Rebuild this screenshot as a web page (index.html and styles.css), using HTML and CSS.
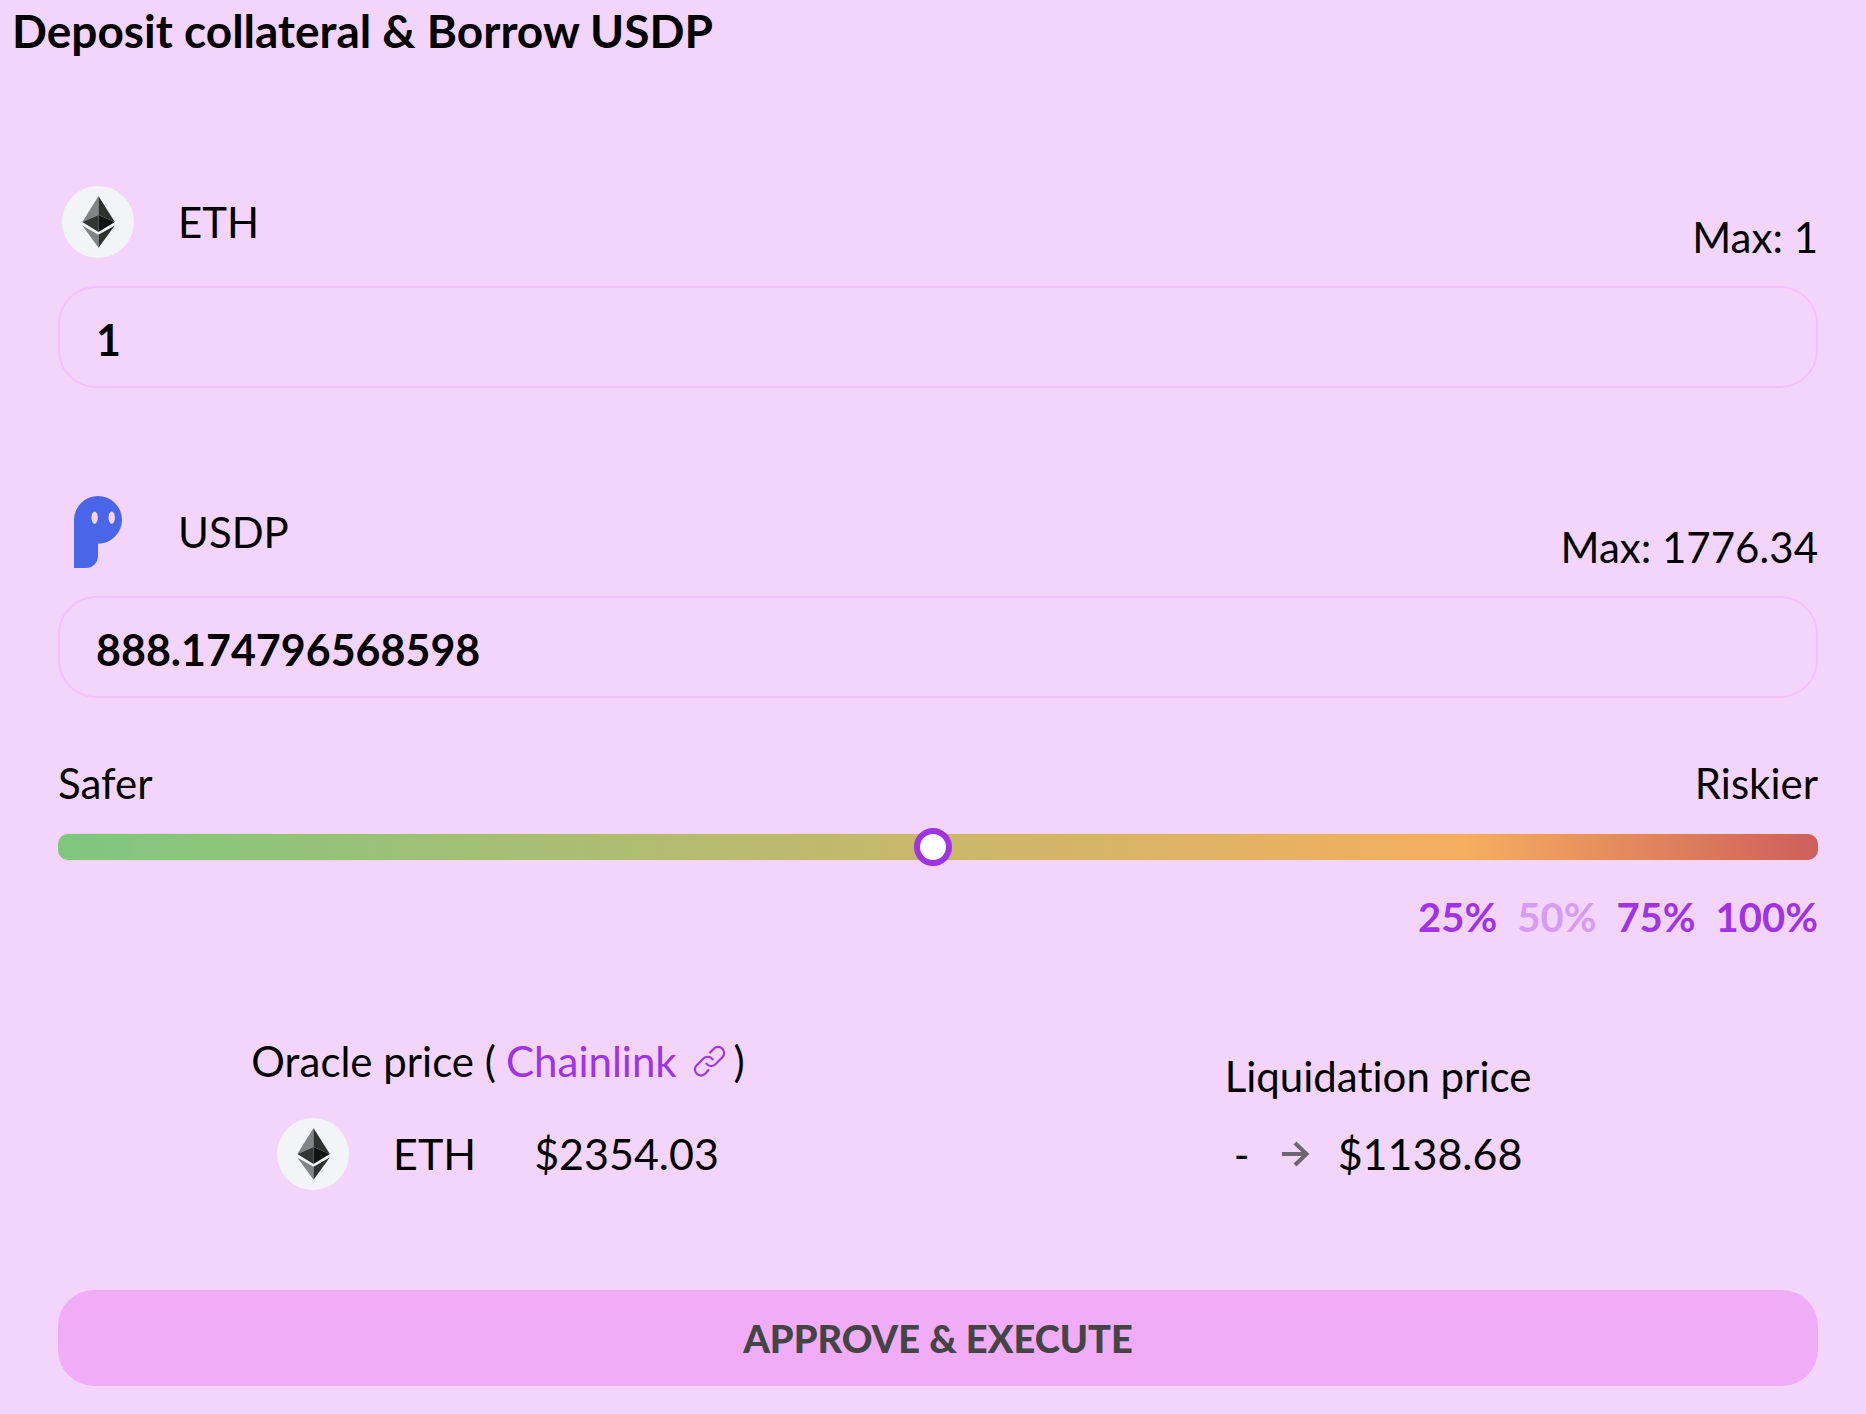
FILE: index.html
```html
<!DOCTYPE html>
<html lang="en">
<head>
    <meta charset="UTF-8">
    <meta name="viewport" content="width=device-width, initial-scale=1.0">
    <title>Deposit collateral &amp; Borrow USDP</title>
    <link rel="stylesheet" href="styles.css">
</head>
<body>

    <!-- Shared icon shapes -->
    <svg class="sprite" aria-hidden="true">
        <symbol id="eth" viewBox="0 0 72 72">
            <circle cx="36" cy="36" r="36" fill="#f2f4f8"/>
            <path fill="#828384" d="M36.5 10v19L20.3 36z"/>
            <path fill="#2f3030" d="M36.5 10v19l16.3 7z"/>
            <path fill="#343535" d="M36.5 29v17L20.3 36z"/>
            <path fill="#131313" d="M36.5 29v17l16.3-10z"/>
            <path fill="#828384" d="M20.3 39.5l16.2 9.2v13z"/>
            <path fill="#2f3030" d="M52.8 39.5l-16.3 9.2v13z"/>
        </symbol>
    </svg>

    <h1>Deposit collateral &amp; Borrow USDP</h1>

    <main class="form">
        <div class="field">
            <div class="field-head">
                <svg class="token" aria-hidden="true"><use href="#eth"/></svg>
                <label for="ethAmount">ETH</label>
                <span class="max">Max: 1</span>
            </div>
            <input type="text" id="ethAmount" class="amount" value="1">
        </div>

        <div class="field">
            <div class="field-head">
                <svg class="token" viewBox="0 0 72 72" aria-hidden="true">
                    <path fill="#4965e8" d="M12 24a24 24 0 0 1 48 0 24 24 0 0 1-24 23.7V60a12 12 0 0 1-12 12H12z"/>
                    <ellipse cx="32.6" cy="21.7" rx="3.2" ry="6.2" fill="#f3d5fb"/>
                    <ellipse cx="49.7" cy="21.7" rx="3.2" ry="6.2" fill="#f3d5fb"/>
                </svg>
                <label for="usdpAmount">USDP</label>
                <span class="max">Max: 1776.34</span>
            </div>
            <input type="text" id="usdpAmount" class="amount" value="888.174796568598">
        </div>

        <div class="risk">
            <div class="risk-labels">
                <span>Safer</span>
                <span>Riskier</span>
            </div>
            <input type="range" class="slider" min="0" max="1000" value="497" aria-label="Risk level">
            <div class="percents">
                <button type="button">25%</button>
                <button type="button" disabled>50%</button>
                <button type="button">75%</button>
                <button type="button">100%</button>
            </div>
        </div>

        <div class="prices">
            <div class="price">
                <div class="price-title">
                    <span>Oracle price (</span>
                    <a href="#">Chainlink
                        <svg class="link-icon" viewBox="0 0 30 30" aria-hidden="true">
                            <path d="M16 7l3.500-3.500a5.600 5.600 0 0 1 8 0 5.600 5.600 0 0 1 0 8l-6.500 6.500a5.600 5.600 0 0 1-8.500-.5"/>
                            <path d="M14.500 23.500l-3 3.500a5.600 5.600 0 0 1-8 0 5.600 5.600 0 0 1 0-8l6.500-6.500a5.600 5.600 0 0 1 8.500 1"/>
                        </svg></a>
                    <span>)</span>
                </div>
                <div class="price-row">
                    <svg class="token" aria-hidden="true"><use href="#eth"/></svg>
                    <span class="symbol">ETH</span>
                    <span>$2354.03</span>
                </div>
            </div>
            <div class="price">
                <div class="price-title">Liquidation price</div>
                <div class="price-row">
                    <span>-</span>
                    <svg class="arrow" viewBox="0 0 28 28" aria-hidden="true">
                        <path d="M0 14h25M13 3l11.500 11L13 25"/>
                    </svg>
                    <span>$1138.68</span>
                </div>
            </div>
        </div>

        <button type="button" class="submit">APPROVE &amp; EXECUTE</button>
    </main>

</body>
</html>
```

FILE: styles.css
```css
* {
    box-sizing: border-box;
}
body {
    margin: 0;
    background-color: #f3d5fb;
    color: #000;
    font-family: Lato, "Open Sans", sans-serif;
    font-size: 42px;
    font-variant-ligatures: none;
    line-height: 42px;
}
button,
input {
    font-family: inherit;
    font-size: inherit;
}
.sprite {
    display: none;
}
h1 {
    margin: 0;
    padding: 0 12px;
    font-size: 46px;
    line-height: 62px;
}
.form {
    display: flex;
    flex-direction: column;
    padding: 124px 48px 28px 58px;
}

/* Amount fields */
.field {
    margin-bottom: 108px;
}
.field-head {
    display: flex;
    align-items: center;
    margin-bottom: 28px;
    padding-left: 4px;
}
.token {
    width: 72px;
    height: 72px;
    margin-right: 44px;
}
.max {
    margin-left: auto;
    align-self: flex-end;
}
.amount {
    display: block;
    width: 100%;
    height: 102px;
    padding: 4px 36px 0;
    border: 2px solid #f1c3fa;
    border-radius: 38px;
    background: transparent;
    color: #000;
    font-size: 43px;
    font-weight: bold;
}

/* Risk slider */
.risk {
    margin-top: -44px;
}
.risk-labels {
    display: flex;
    justify-content: space-between;
    margin-bottom: 30px;
}
.slider {
    -webkit-appearance: none;
    appearance: none;
    display: block;
    width: 100%;
    height: 26px;
    margin: 0;
    border-radius: 10px;
    background: linear-gradient(to right, #7fc77f, #f6ae5f 80%, #cd5f5c);
}
.slider::-webkit-slider-thumb {
    -webkit-appearance: none;
    appearance: none;
    width: 38px;
    height: 38px;
    border: 6px solid #a033e5;
    border-radius: 50%;
    background: #fff;
}
.percents {
    display: flex;
    justify-content: flex-end;
    gap: 20px;
    margin-top: 36px;
}
.percents button {
    padding: 0;
    border: 0;
    background: none;
    color: #a033e5;
    font-size: 40px;
    font-weight: bold;
    line-height: 42px;
}
.percents button:disabled {
    opacity: 0.35;
}

/* Prices */
.prices {
    display: grid;
    grid-template-columns: 1fr 1fr;
    align-items: center;
    margin: 102px 0 100px;
}
.price {
    display: flex;
    flex-direction: column;
    align-items: center;
    gap: 36px;
}
.price-title,
.price-row {
    display: flex;
    align-items: center;
}
.price-row {
    font-size: 43px;
}
.price-title a {
    margin: 0 8px 0 10px;
    color: #a033e5;
    text-decoration: none;
}
.link-icon {
    width: 32px;
    height: 32px;
    margin-left: 6px;
    overflow: visible;
    fill: none;
    stroke: #a033e5;
    stroke-width: 2;
    stroke-linecap: round;
}
.symbol {
    margin-right: 58px;
}
.arrow {
    width: 28px;
    height: 28px;
    margin: 0 28px 0 32px;
    fill: none;
    stroke: #6b676d;
    stroke-width: 4;
}

.submit {
    height: 96px;
    border: 0;
    border-radius: 36px;
    background-color: #f1acf8;
    color: #444;
    font-size: 38px;
    font-weight: 900;
}
```
